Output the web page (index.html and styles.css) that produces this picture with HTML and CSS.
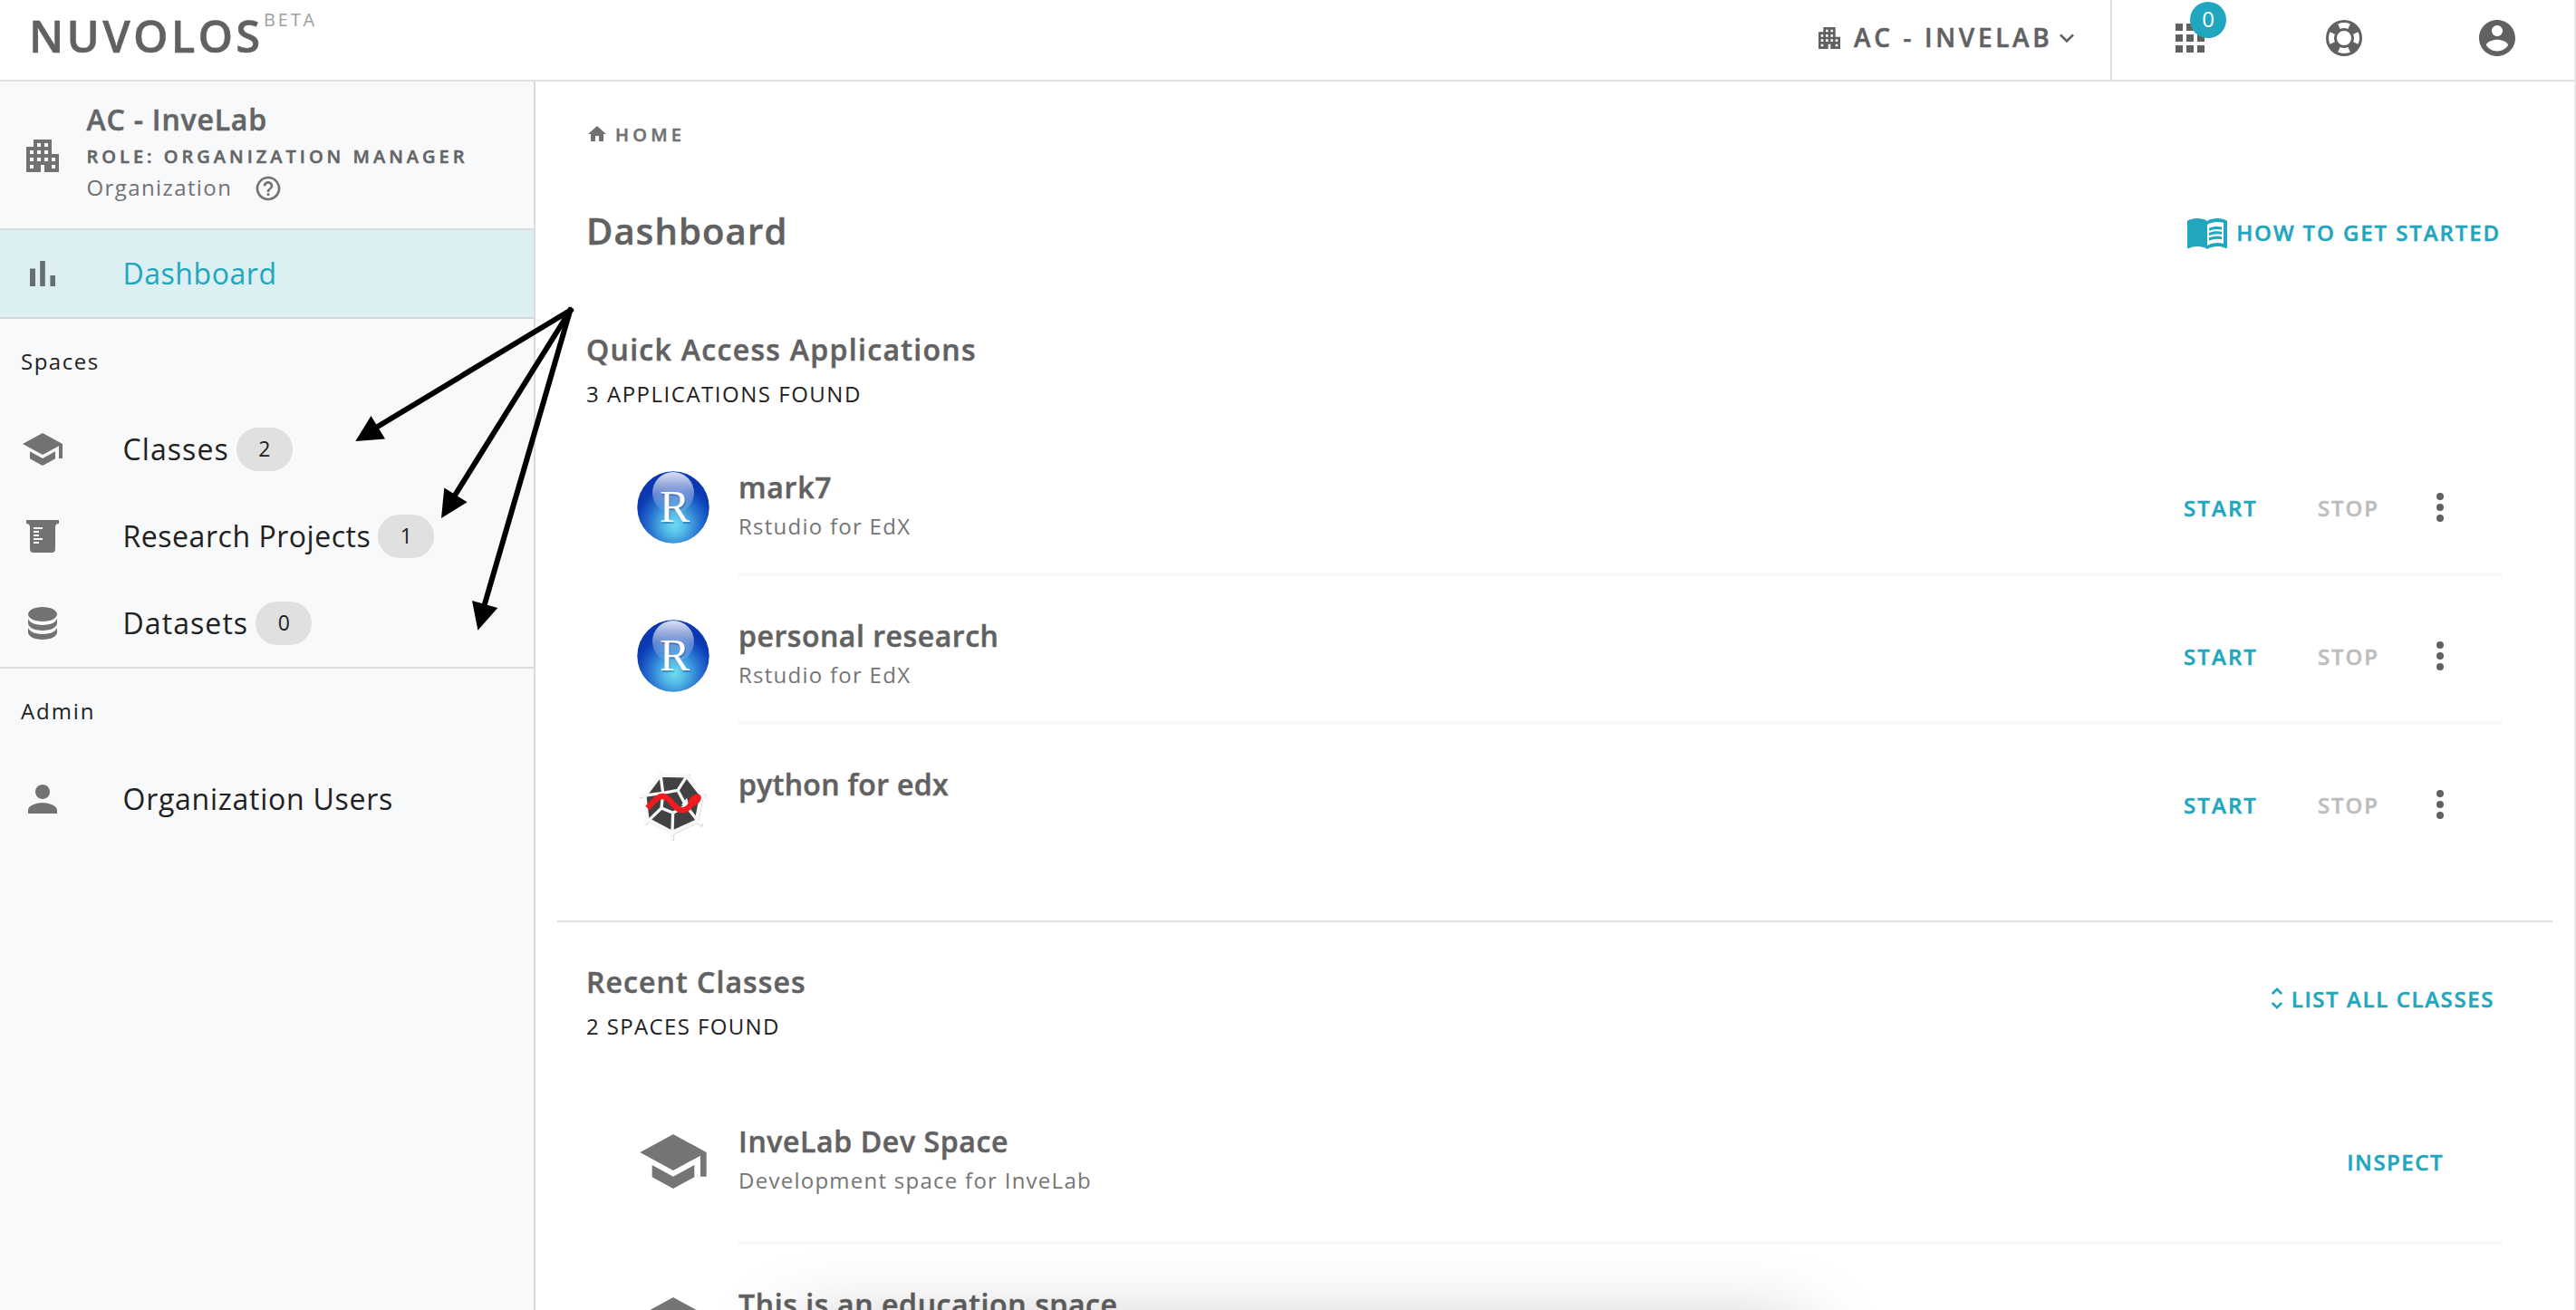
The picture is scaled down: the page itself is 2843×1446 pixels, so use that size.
FILE: index.html
```html
<!DOCTYPE html>
<html lang="en">
<head>
<meta charset="utf-8">
<title>Nuvolos - Dashboard</title>
<link rel="stylesheet" href="styles.css">
</head>
<body>
<svg class="defs" aria-hidden="true">
  <defs>
    <symbol id="i-building" viewBox="0 0 24 24"><path d="M17 11V3H7v4H3v14h8v-4h2v4h8V11h-4zM7 19H5v-2h2v2zm0-4H5v-2h2v2zm0-4H5V9h2v2zm4 4H9v-2h2v2zm0-4H9V9h2v2zm0-4H9V5h2v2zm4 8h-2v-2h2v2zm0-4h-2V9h2v2zm0-4h-2V5h2v2zm4 12h-2v-2h2v2zm0-4h-2v-2h2v2z"/></symbol>
    <symbol id="i-school" viewBox="0 0 24 24"><path d="M5 13.18v4L12 21l7-3.82v-4L12 17l-7-3.82zM12 3L1 9l11 6 9-4.91V17h2V9L12 3z"/></symbol>
    <symbol id="i-more" viewBox="0 0 24 24"><circle cx="12" cy="6" r="2"/><circle cx="12" cy="12" r="2"/><circle cx="12" cy="18" r="2"/></symbol>
    <radialGradient id="r-ball" cx="0.52" cy="0.74" r="0.58">
      <stop offset="0" stop-color="#6fdcf0"/>
      <stop offset="0.25" stop-color="#55bbe6"/>
      <stop offset="0.6" stop-color="#2873d0"/>
      <stop offset="0.9" stop-color="#0d3fb8"/>
      <stop offset="1" stop-color="#0b38b0"/>
    </radialGradient>
    <linearGradient id="r-gloss" x1="0" y1="0" x2="0" y2="1">
      <stop offset="0" stop-color="#fff" stop-opacity="0.85"/>
      <stop offset="0.55" stop-color="#fff" stop-opacity="0.35"/>
      <stop offset="1" stop-color="#fff" stop-opacity="0.05"/>
    </linearGradient>
    <symbol id="i-rstudio" viewBox="0 0 80 80">
      <circle cx="40" cy="40" r="39.7" fill="url(#r-ball)"/>
      <circle cx="40" cy="24" r="23" fill="url(#r-gloss)"/>
      <text class="r-letter shade" x="26" y="57.5">R</text>
      <text class="r-letter" x="25" y="56">R</text>
    </symbol>
  </defs>
</svg>

<div class="app">
  <header class="topbar">
    <div class="logo">NUVOLOS</div>
    <div class="beta">BETA</div>
    <div class="org-switch">
      <svg class="ic32"><use href="#i-building"/></svg>
      <span class="org-name">AC - INVELAB</span>
      <svg class="ic32" viewBox="0 0 24 24"><path d="M16.59 8.59L12 13.17 7.41 8.59 6 10l6 6 6-6z"/></svg>
    </div>
    <div class="tools">
      <div class="apps">
        <svg class="ic48" viewBox="0 0 24 24"><path d="M4 8h4V4H4v4zm6 12h4v-4h-4v4zm-6 0h4v-4H4v4zm0-6h4v-4H4v4zm6 0h4v-4h-4v4zm6-10v4h4V4h-4zm-6 4h4V4h-4v4zm6 6h4v-4h-4v4zm0 6h4v-4h-4v4z"/></svg>
        <span class="count">0</span>
      </div>
      <svg class="ic48" viewBox="0 0 24 24"><path d="M19.79,15.41C20.74,13.24 20.74,10.75 19.79,8.59L17.05,9.83C17.65,11.21 17.65,12.78 17.06,14.17L19.79,15.41M15.42,4.21C13.25,3.26 10.76,3.26 8.59,4.21L9.83,6.94C11.22,6.35 12.79,6.35 14.18,6.95L15.42,4.21M4.21,8.58C3.26,10.76 3.26,13.24 4.21,15.42L6.95,14.17C6.35,12.79 6.35,11.21 6.95,9.82L4.21,8.58M8.59,19.79C10.76,20.74 13.25,20.74 15.42,19.78L14.18,17.05C12.8,17.65 11.22,17.65 9.84,17.06L8.59,19.79M12,2A10,10 0 0,1 22,12A10,10 0 0,1 12,22A10,10 0 0,1 2,12A10,10 0 0,1 12,2M12,8A4,4 0 0,0 8,12A4,4 0 0,0 12,16A4,4 0 0,0 16,12A4,4 0 0,0 12,8Z" fill-rule="evenodd"/></svg>
      <svg class="ic48" viewBox="0 0 24 24"><path d="M12 2C6.48 2 2 6.48 2 12s4.48 10 10 10 10-4.48 10-10S17.52 2 12 2zm0 3c1.66 0 3 1.34 3 3s-1.34 3-3 3-3-1.34-3-3 1.34-3 3-3zm0 14.2c-2.5 0-4.71-1.28-6-3.22.03-1.99 4-3.08 6-3.08 1.99 0 5.97 1.09 6 3.08-1.29 1.94-3.5 3.22-6 3.22z"/></svg>
    </div>
  </header>

  <div class="columns">
    <aside class="sidebar">
      <div class="profile">
        <svg class="ic48"><use href="#i-building"/></svg>
        <div class="profile-text">
          <div class="profile-name">AC - InveLab</div>
          <div class="profile-role">ROLE: ORGANIZATION MANAGER</div>
          <div class="profile-kind"><span>Organization</span>
            <svg class="ic32" viewBox="0 0 24 24"><path d="M11 18h2v-2h-2v2zm1-16C6.48 2 2 6.48 2 12s4.48 10 10 10 10-4.48 10-10S17.52 2 12 2zm0 18c-4.41 0-8-3.59-8-8s3.59-8 8-8 8 3.59 8 8-3.59 8-8 8zm0-14c-2.21 0-4 1.79-4 4h2c0-1.1.9-2 2-2s2 .9 2 2c0 2-3 1.75-3 5h2c0-2.25 3-2.5 3-5 0-2.21-1.79-4-4-4z"/></svg>
          </div>
        </div>
      </div>
      <nav>
        <a class="item active"><svg class="ic48" viewBox="0 0 24 24"><path d="M5 9.2h3V19H5zM10.6 5h2.8v14h-2.8zm5.6 8H19v6h-2.8z"/></svg><span class="label ls-05">Dashboard</span></a>
        <div class="group ls-15">Spaces</div>
        <a class="item"><svg class="ic48"><use href="#i-school"/></svg><span class="label ls-10">Classes</span><span class="chip">2</span></a>
        <a class="item"><svg class="ic48" viewBox="0 0 24 24"><path fill-rule="evenodd" d="M3,3H21V5A2,2 0 0,0 19,7V19A2,2 0 0,1 17,21H7A2,2 0 0,1 5,19V7A2,2 0 0,0 3,5V3M7,7V8H12V7ZM7,9V10H10V9ZM7,11V12H10V11ZM7,13V14H12V13ZM7,15V16H10V15Z"/></svg><span class="label ls-05">Research Projects</span><span class="chip">1</span></a>
        <a class="item last"><svg class="ic48" viewBox="0 0 24 24"><path d="M12,3C7.58,3 4,4.79 4,7C4,9.21 7.58,11 12,11C16.42,11 20,9.21 20,7C20,4.79 16.42,3 12,3M4,9V12C4,14.21 7.58,16 12,16C16.42,16 20,14.21 20,12V9C20,11.21 16.42,13 12,13C7.58,13 4,11.21 4,9M4,14V17C4,19.21 7.58,21 12,21C16.42,21 20,19.21 20,17V14C20,16.21 16.42,18 12,18C7.58,18 4,16.21 4,14Z"/></svg><span class="label ls-10">Datasets</span><span class="chip">0</span></a>
        <div class="group ls-19">Admin</div>
        <a class="item"><svg class="ic48" viewBox="0 0 24 24"><path d="M12 12c2.21 0 4-1.79 4-4s-1.79-4-4-4-4 1.79-4 4 1.79 4 4 4zm0 2c-2.67 0-8 1.34-8 4v2h16v-2c0-2.66-5.33-4-8-4z"/></svg><span class="label ls-07">Organization Users</span></a>
      </nav>
    </aside>

    <main>
      <div class="crumbs">
        <svg class="ic24" viewBox="0 0 24 24"><path d="M10 20v-6h4v6h5v-8h3L12 3 2 12h3v8z"/></svg>
        <span>HOME</span>
      </div>
      <div class="title-row">
        <h1>Dashboard</h1>
        <a class="link how-to">
          <svg class="ic48" viewBox="0 0 24 24"><path fill-rule="evenodd" d="M21 5c-1.11-.35-2.33-.5-3.5-.5-1.95 0-4.05.4-5.5 1.5-1.45-1.1-3.55-1.5-5.5-1.5S2.45 4.9 1 6v14.65c0 .25.25.5.5.5.1 0 .15-.05.25-.05C3.1 20.45 5.05 20 6.5 20c1.95 0 4.05.4 5.5 1.5 1.35-.85 3.8-1.5 5.5-1.5 1.65 0 3.35.3 4.75 1.05.1.05.15.05.25.05.25 0 .5-.25.5-.5V6c-.6-.45-1.25-.75-2-1zm0 13.5c-1.1-.35-2.3-.5-3.5-.5-1.7 0-4.15.65-5.5 1.5V8c1.35-.85 3.8-1.5 5.5-1.5 1.2 0 2.4.15 3.5.5v11.5z"/><path d="M17.5 10.5c.88 0 1.73.09 2.5.26V9.24c-.79-.15-1.64-.24-2.5-.24-1.7 0-3.24.29-4.5.83v1.66c1.13-.64 2.7-.99 4.5-.99zM13 12.49v1.66c1.13-.64 2.7-.99 4.5-.99.88 0 1.73.09 2.5.26V11.9c-.79-.15-1.64-.24-2.5-.24-1.7 0-3.24.3-4.5.83zM17.5 14.33c-1.7 0-3.24.29-4.5.83v1.66c1.13-.64 2.7-.99 4.5-.99.88 0 1.73.09 2.5.26v-1.52c-.79-.16-1.64-.24-2.5-.24z"/></svg>
          <span>HOW TO GET STARTED</span>
        </a>
      </div>

      <section class="block">
        <div class="block-head">
          <div><h2 class="ls-13">Quick Access Applications</h2><p class="ls-15">3 APPLICATIONS FOUND</p></div>
        </div>
        <div class="row">
          <svg class="ic80"><use href="#i-rstudio"/></svg>
          <div class="row-body">
            <div class="row-text"><h3 class="ls-07">mark7</h3><p class="ls-12">Rstudio for EdX</p></div>
            <div class="row-actions"><a class="link start">START</a><a class="link stop">STOP</a><svg class="ic48 more"><use href="#i-more"/></svg></div>
          </div>
        </div>
        <div class="row">
          <svg class="ic80"><use href="#i-rstudio"/></svg>
          <div class="row-body">
            <div class="row-text"><h3 class="ls-05">personal research</h3><p class="ls-12">Rstudio for EdX</p></div>
            <div class="row-actions"><a class="link start">START</a><a class="link stop">STOP</a><svg class="ic48 more"><use href="#i-more"/></svg></div>
          </div>
        </div>
        <div class="row plain">
          <svg class="ic80" viewBox="41 54 240 240">
            <g fill="none" stroke="#c9c9c9" stroke-width="11"><path d="M119 69L126 88M214 73L203 88M272 145L252 146M257 245L236 228M159 293L159 262M69 240L84 222M48 149L72 147"/><path d="M120 78L207 81L257 145L240 232L159 269L76 225L67 148Z"/></g>
            <path d="M118 77L205 79L255 143L238 230L157 267L75 223L66 146Z" fill="#414141" stroke="#f8f8f8" stroke-width="13"/>
            <g fill="none" stroke="#f8f8f8" stroke-width="10"><path d="M118 67L127 136L47 147M127 136L176 127L212 71M176 127L203 178L270 143M203 178L254 243M203 178L160 202L157 292M160 202L122 186L68 238M122 186L127 136"/></g>
            <path d="M188 176L206 152L214 178Z" fill="#f8f8f8"/>
            <path d="M76 186C97 163 108 147 127 147C152 148 163 193 192 193C214 192 219 171 232 160" fill="none" stroke="#ee1b1f" stroke-width="19"/>
            <ellipse cx="232" cy="160" rx="25" ry="16" transform="rotate(-42 232 160)" fill="#ee1b1f"/>
          </svg>
          <div class="row-body">
            <div class="row-text"><h3 class="ls-03">python for edx</h3></div>
            <div class="row-actions"><a class="link start">START</a><a class="link stop">STOP</a><svg class="ic48 more"><use href="#i-more"/></svg></div>
          </div>
        </div>
      </section>

      <section class="block recent">
        <div class="block-head">
          <div><h2 class="ls-10">Recent Classes</h2><p class="ls-14">2 SPACES FOUND</p></div>
          <a class="link list-all">
            <svg class="ic32" viewBox="0 0 24 24"><path d="M12 5.83L15.17 9l1.41-1.41L12 3 7.41 7.59 8.83 9 12 5.83zm0 12.34L8.83 15l-1.41 1.41L12 21l4.59-4.59L15.17 15 12 18.17z"/></svg>
            <span>LIST ALL CLASSES</span>
          </a>
        </div>
        <div class="row tall">
          <svg class="ic80 muted"><use href="#i-school"/></svg>
          <div class="row-body">
            <div class="row-text"><h3 class="ls-06">InveLab Dev Space</h3><p class="ls-12">Development space for InveLab</p></div>
            <div class="row-actions inspect"><a class="link">INSPECT</a></div>
          </div>
        </div>
        <div class="row tall">
          <svg class="ic80 muted"><use href="#i-school"/></svg>
          <div class="row-body">
            <div class="row-text"><h3 class="ls-06">This is an education space</h3></div>
          </div>
        </div>
      </section>
    </main>
  </div>

  <div class="sheet-shadow"></div>

  <svg class="arrows" viewBox="0 0 2843 1446">
    <g stroke="#000" stroke-width="6" fill="none">
      <path d="M632 341L410 475"/>
      <path d="M631 340L500 550"/>
      <path d="M630 340L534 670"/>
    </g>
    <path d="M392.300 487L409.500 459L425 484.500Z"/>
    <path d="M487 572L490.300 538.600L515.600 554.300Z"/>
    <path d="M527.400 695.700L521 662.900L549.300 671Z"/>
  </svg>
</div>
</body>
</html>
```
FILE: styles.css
```css
* { box-sizing: border-box; }
html, body { margin: 0; height: 100%; overflow: hidden; }
body {
  background: #fff;
  color: #212121;
  font-family: "Open Sans", "Noto Sans", sans-serif;
  font-size: 24px;
}
h1, h2, h3, p { margin: 0; }
svg { display: block; flex: none; fill: currentColor; }
.defs { position: absolute; width: 0; height: 0; }
.ic24 { width: 24px; height: 24px; }
.ic32 { width: 32px; height: 32px; }
.ic48 { width: 48px; height: 48px; }
.ic80 { width: 80px; height: 80px; }

/* semibold text gets a hairline stroke for a firmer weight */
.logo, .org-name, .profile-name, .profile-role, .crumbs span, h1, h2, h3, .link span, a.link {
  -webkit-text-stroke: 0.5px currentColor;
}

/* tracking steps */
.ls-03 { letter-spacing: 0.32px; }
.ls-05 { letter-spacing: 0.54px; }
.ls-06 { letter-spacing: 0.62px; }
.ls-07 { letter-spacing: 0.74px; }
.ls-10 { letter-spacing: 1.08px; }
.ls-12 { letter-spacing: 1.26px; }
.ls-13 { letter-spacing: 1.31px; }
.ls-14 { letter-spacing: 1.37px; }
.ls-15 { letter-spacing: 1.51px; }
.ls-19 { letter-spacing: 1.9px; }

.app {
  position: relative;
  display: flex;
  flex-direction: column;
  height: 1446px;
  border-right: 2px solid #e8e8e8;
  overflow: hidden;
  white-space: nowrap;
}

/* top bar */
.topbar {
  flex: none;
  display: flex;
  height: 90px;
  padding-left: 32px;
  border-bottom: 2px solid #e0e0e0;
  color: #616161;
}
.logo {
  width: 259px;
  padding-top: 9px;
  font-size: 49px;
  font-weight: 600;
  line-height: 60px;
  letter-spacing: 3.2px;
}
.beta {
  padding-top: 10px;
  color: #9e9e9e;
  font-size: 20px;
  line-height: 24px;
  letter-spacing: 2.8px;
}
.org-switch {
  display: flex;
  align-items: center;
  width: 326px;
  height: 84px;
  margin-left: auto;
}
.org-name {
  width: 219px;
  margin: -2px 0 0 11px;
  font-size: 28px;
  font-weight: 600;
  letter-spacing: 3.65px;
}
.tools {
  display: flex;
  align-items: center;
  gap: 121.500px;
  width: 512px;
  height: 90px;
  padding: 0 61px 6px 62px;
  border-left: 2px solid #e0e0e0;
}
.apps { position: relative; }
.count {
  position: absolute;
  left: 24px;
  top: -16px;
  width: 40px;
  height: 40px;
  border-radius: 50%;
  background: #21a6bf;
  color: #fff;
  line-height: 38px;
  text-align: center;
}

.columns { flex: 1; display: flex; min-height: 0; }

/* sidebar */
.sidebar {
  flex: none;
  width: 591px;
  background: #f8f9fb;
  border-right: 2px solid #dadbdd;
}
.profile {
  display: flex;
  height: 164px;
  padding-left: 23px;
  border-bottom: 2px solid #dadbdd;
  color: #636466;
}
.profile > svg { margin-top: 58px; color: #717274; }
.profile-text { margin-left: 24.500px; padding-top: 20px; }
.profile-name { font-size: 32px; font-weight: 600; line-height: 44px; letter-spacing: 0.8px; }
.profile-role { font-size: 20px; font-weight: 600; line-height: 38px; letter-spacing: 4px; }
.profile-kind { display: flex; align-items: center; height: 30px; color: #717274; line-height: 30px; letter-spacing: 1.400px; }
.profile-kind span { width: 184.500px; }
.profile-kind svg { margin-top: 2px; }
.item { display: flex; align-items: center; height: 96px; padding-left: 23px; }
.item svg { color: rgba(0, 0, 0, 0.54); }
.label { margin: -2px 0 0 64.500px; font-size: 32px; }
.item.active { height: 98px; background: #dceff3; border-bottom: 2px solid #cfd9dc; }
.active .label { color: #21a6bf; }
.item.last { height: 98px; border-bottom: 2px solid #dadbdd; }
.group { height: 96px; padding-left: 23px; line-height: 93px; }
.chip {
  width: 62px;
  height: 48px;
  margin-left: 8px;
  border-radius: 24px;
  background: #e0e0e0;
  font-size: 23px;
  line-height: 47px;
  text-align: center;
}

/* main column */
main { flex: 1; padding-top: 46px; color: #616161; }
.crumbs {
  display: flex;
  gap: 8px;
  margin-left: 56px;
  color: #717171;
  font-size: 20px;
  font-weight: 600;
  line-height: 25px;
  height: 24px;
  letter-spacing: 4.200px;
}
.title-row {
  display: flex;
  justify-content: space-between;
  align-items: center;
  height: 60px;
  margin: 66px 81px 0 56px;
}
h1 { padding-bottom: 3px; font-size: 40px; font-weight: 600; letter-spacing: 1.150px; }
.link { color: #21a6bf; font-weight: 600; }
.how-to { display: flex; align-items: center; gap: 8px; letter-spacing: 1.900px; }
.block { margin-top: 78px; }
.block-head { display: flex; justify-content: space-between; height: 89px; padding: 0 88px 0 56px; }
h2 { font-size: 32px; font-weight: 600; line-height: 44px; }
.block-head p { margin-top: 9px; color: #212121; line-height: 36px; }
.block-head + .row { margin-top: 19px; }
.row { display: flex; height: 164px; padding: 0 80px 0 112px; }
.row > svg { margin-top: 48px; }
.row-body {
  flex: 1;
  display: flex;
  justify-content: space-between;
  margin-left: 32px;
  border-bottom: 4px solid #f7f7f7;
}
.row.plain .row-body { border-color: transparent; }
.row.tall { height: 180px; }
.row-text { padding-top: 43.500px; }
h3 { font-size: 32px; font-weight: 600; line-height: 44px; }
.row-text p { margin-top: 3.500px; color: #757575; line-height: 36px; }
.row-actions { display: flex; align-items: center; height: 48px; margin-top: 64px; padding-right: 44px; }
.start { width: 148px; letter-spacing: 2.100px; }
a.stop { width: 111px; color: #bdbdbd; letter-spacing: 1.900px; }
.inspect { padding-right: 64px; letter-spacing: 1.500px; }
.muted { color: #757575; }
.recent { margin: 52px 24px 0; padding-top: 43px; border-top: 2px solid #e0e0e0; }
.recent .block-head { padding: 0 64px 0 32px; }
.recent h2 { padding-top: 1px; }
.recent .row { padding: 0 56px 0 88px; }
.recent .block-head + .row { margin-top: 44px; }
.list-all { display: flex; align-items: center; height: 32px; margin-top: 25px; letter-spacing: 1.600px; }

.r-letter { fill: #fff; font-family: "Liberation Serif", serif; font-size: 50px; }
.r-letter.shade { fill: rgba(10, 50, 120, 0.35); }

/* shade cast by the sheet docked under the page */
.sheet-shadow {
  position: absolute;
  left: 870px;
  top: 1470px;
  width: 1122px;
  height: 300px;
  border-radius: 20px;
  box-shadow: 0 0 88px rgba(0, 0, 0, 0.28);
}
.arrows { position: absolute; left: 0; top: 0; width: 2843px; height: 1446px; fill: #000; }
```
